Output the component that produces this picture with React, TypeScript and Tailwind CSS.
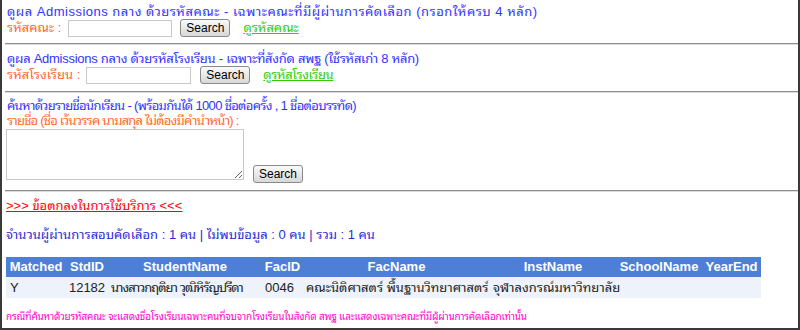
import React from "react"

const rows = [
  {
    matched: "Y",
    stdId: "12182",
    name: "นางสาวกฤติยา วุฒิหิรัญปรีดา",
    facId: "0046",
    facName: "คณะนิติศาสตร์ พื้นฐานวิทยาศาสตร์",
    inst: "จุฬาลงกรณ์มหาวิทยาลัย",
    school: "",
    yearEnd: "",
  },
]

const headers = ["Matched", "StdID", "StudentName", "FacID", "FacName", "InstName", "SchoolName", "YearEnd"]

// old-style inset horizontal rule
const Rule = () => <div className="ml-[3px] border-t border-b border-t-[#8e8e8e] border-b-[#dcdcdc]" />

const SearchButton = () => (
  <button className="h-[18px] w-[50px] rounded-[3px] border border-[#8a8a8a] bg-gradient-to-b from-[#fafafa] to-[#d8d8d8] font-['Liberation_Sans',sans-serif] text-[12px] leading-none text-black">
    Search
  </button>
)

export default function App() {
  return (
    <div className="h-[330px] w-[800px] overflow-hidden border-x-2 border-b-2 border-[#3a3a3a] bg-white font-['Liberation_Sans','Noto_Sans_Thai_Looped',sans-serif] text-[13px] leading-4">
      {/* search by faculty code */}
      <div className="px-[5px] pt-1">
        <div className="h-[15px] whitespace-nowrap tracking-[0.5px] text-[#3333ff]">
          ดูผล Admissions กลาง ด้วยรหัสคณะ - เฉพาะคณะที่มีผู้ผ่านการคัดเลือก (กรอกให้ครบ 4 หลัก)
        </div>
        <div className="flex h-[18px] items-center whitespace-nowrap">
          <span className="mr-[7px] text-[#ff6a2a]">รหัสคณะ :</span>
          <input className="h-[17px] w-[104px] border border-[#c8c8c8]" />
          <span className="ml-[8px]">
            <SearchButton />
          </span>
          <a className="ml-[13px] text-[#33cc00] underline">ดูรหัสคณะ</a>
        </div>
      </div>
      <div className="mt-[6px]">
        <Rule />
      </div>

      {/* search by school code */}
      <div className="px-[5px] pt-[6px]">
        <div className="h-[15px] whitespace-nowrap tracking-[-0.27px] text-[#3333ff]">
          ดูผล Admissions กลาง ด้วยรหัสโรงเรียน - เฉพาะที่สังกัด สพฐ (ใช้รหัสเก่า 8 หลัก)
        </div>
        <div className="flex h-[18px] items-center whitespace-nowrap">
          <span className="mr-[6px] text-[#ff6a2a]">รหัสโรงเรียน :</span>
          <input className="h-[17px] w-[105px] border border-[#c8c8c8]" />
          <span className="ml-[9px]">
            <SearchButton />
          </span>
          <a className="ml-[13px] tracking-[-0.4px] text-[#33cc00] underline">ดูรหัสโรงเรียน</a>
        </div>
      </div>
      <div className="mt-[7px]">
        <Rule />
      </div>

      {/* search by name list */}
      <div className="px-[4px] pt-[5px]">
        <div className="h-[15px] whitespace-nowrap pl-px tracking-[-0.67px] text-[#3333ff]">
          ค้นหาด้วยรายชื่อนักเรียน - (พร้อมกันได้ 1000 ชื่อต่อครั้ง , 1 ชื่อต่อบรรทัด)
        </div>
        <div className="whitespace-nowrap pl-px tracking-[-0.8px] text-[#ff6a2a]">รายชื่อ (ชื่อ เว้นวรรค นามสกุล ไม่ต้องมีคำนำหน้า) :</div>
        <div className="flex items-end">
          <textarea className="h-[51px] w-[238px] border border-[#c8c8c8]" />
          <span className="mb-[-3px] ml-[9px]">
            <SearchButton />
          </span>
        </div>
      </div>
      <div className="mt-[10px]">
        <Rule />
      </div>

      <div className="px-[4px] pt-[6px]">
        <a className="text-[#ff0000] underline">&gt;&gt;&gt; ข้อตกลงในการใช้บริการ &lt;&lt;&lt;</a>
      </div>

      <div className="whitespace-nowrap px-[4px] pt-[13px] text-[#2b2bd6]">
        จำนวนผู้ผ่านการสอบคัดเลือก : 1 คน | ไม่พบข้อมูล : 0 คน | รวม : 1 คน
      </div>

      {/* result table */}
      <div className="px-[4px] pt-[14px]">
        <table className="w-[755px] table-fixed border-collapse">
          <colgroup>
            <col className="w-[60px]" />
            <col className="w-[42px]" />
            <col className="w-[154px]" />
            <col className="w-[41px]" />
            <col className="w-[187px]" />
            <col className="w-[126px]" />
            <col className="w-[86px]" />
            <col className="w-[59px]" />
          </colgroup>
          <thead>
            <tr className="h-[20px] bg-[#4d7fd6] text-white">
              {headers.map((h) => (
                <th key={h} className="whitespace-nowrap p-0 text-center font-bold">
                  {h}
                </th>
              ))}
            </tr>
          </thead>
          <tbody>
            {rows.map((r) => (
              <tr key={r.stdId} className="h-[21px] bg-[#edf2fb] text-[#222]">
                <td className="pl-[4px]">{r.matched}</td>
                <td className="text-center">{r.stdId}</td>
                <td className="whitespace-nowrap pl-[3px] tracking-[-1px]">{r.name}</td>
                <td className="pl-[3px]">{r.facId}</td>
                <td className="whitespace-nowrap pl-[3px]">{r.facName}</td>
                <td className="whitespace-nowrap pl-[3px]">{r.inst}</td>
                <td>{r.school}</td>
                <td>{r.yearEnd}</td>
              </tr>
            ))}
          </tbody>
        </table>
      </div>

      <div className="whitespace-nowrap px-[4px] pt-[12px] text-[10px] leading-[14px] tracking-[-0.2px] text-[#ff00cc]">
        กรณีที่ค้นหาด้วยรหัสคณะ จะแสดงชื่อโรงเรียนเฉพาะคนที่จบจากโรงเรียนในสังกัด สพฐ และแสดงเฉพาะคณะที่มีผู้ผ่านการคัดเลือกเท่านั้น
      </div>
    </div>
  )
}
